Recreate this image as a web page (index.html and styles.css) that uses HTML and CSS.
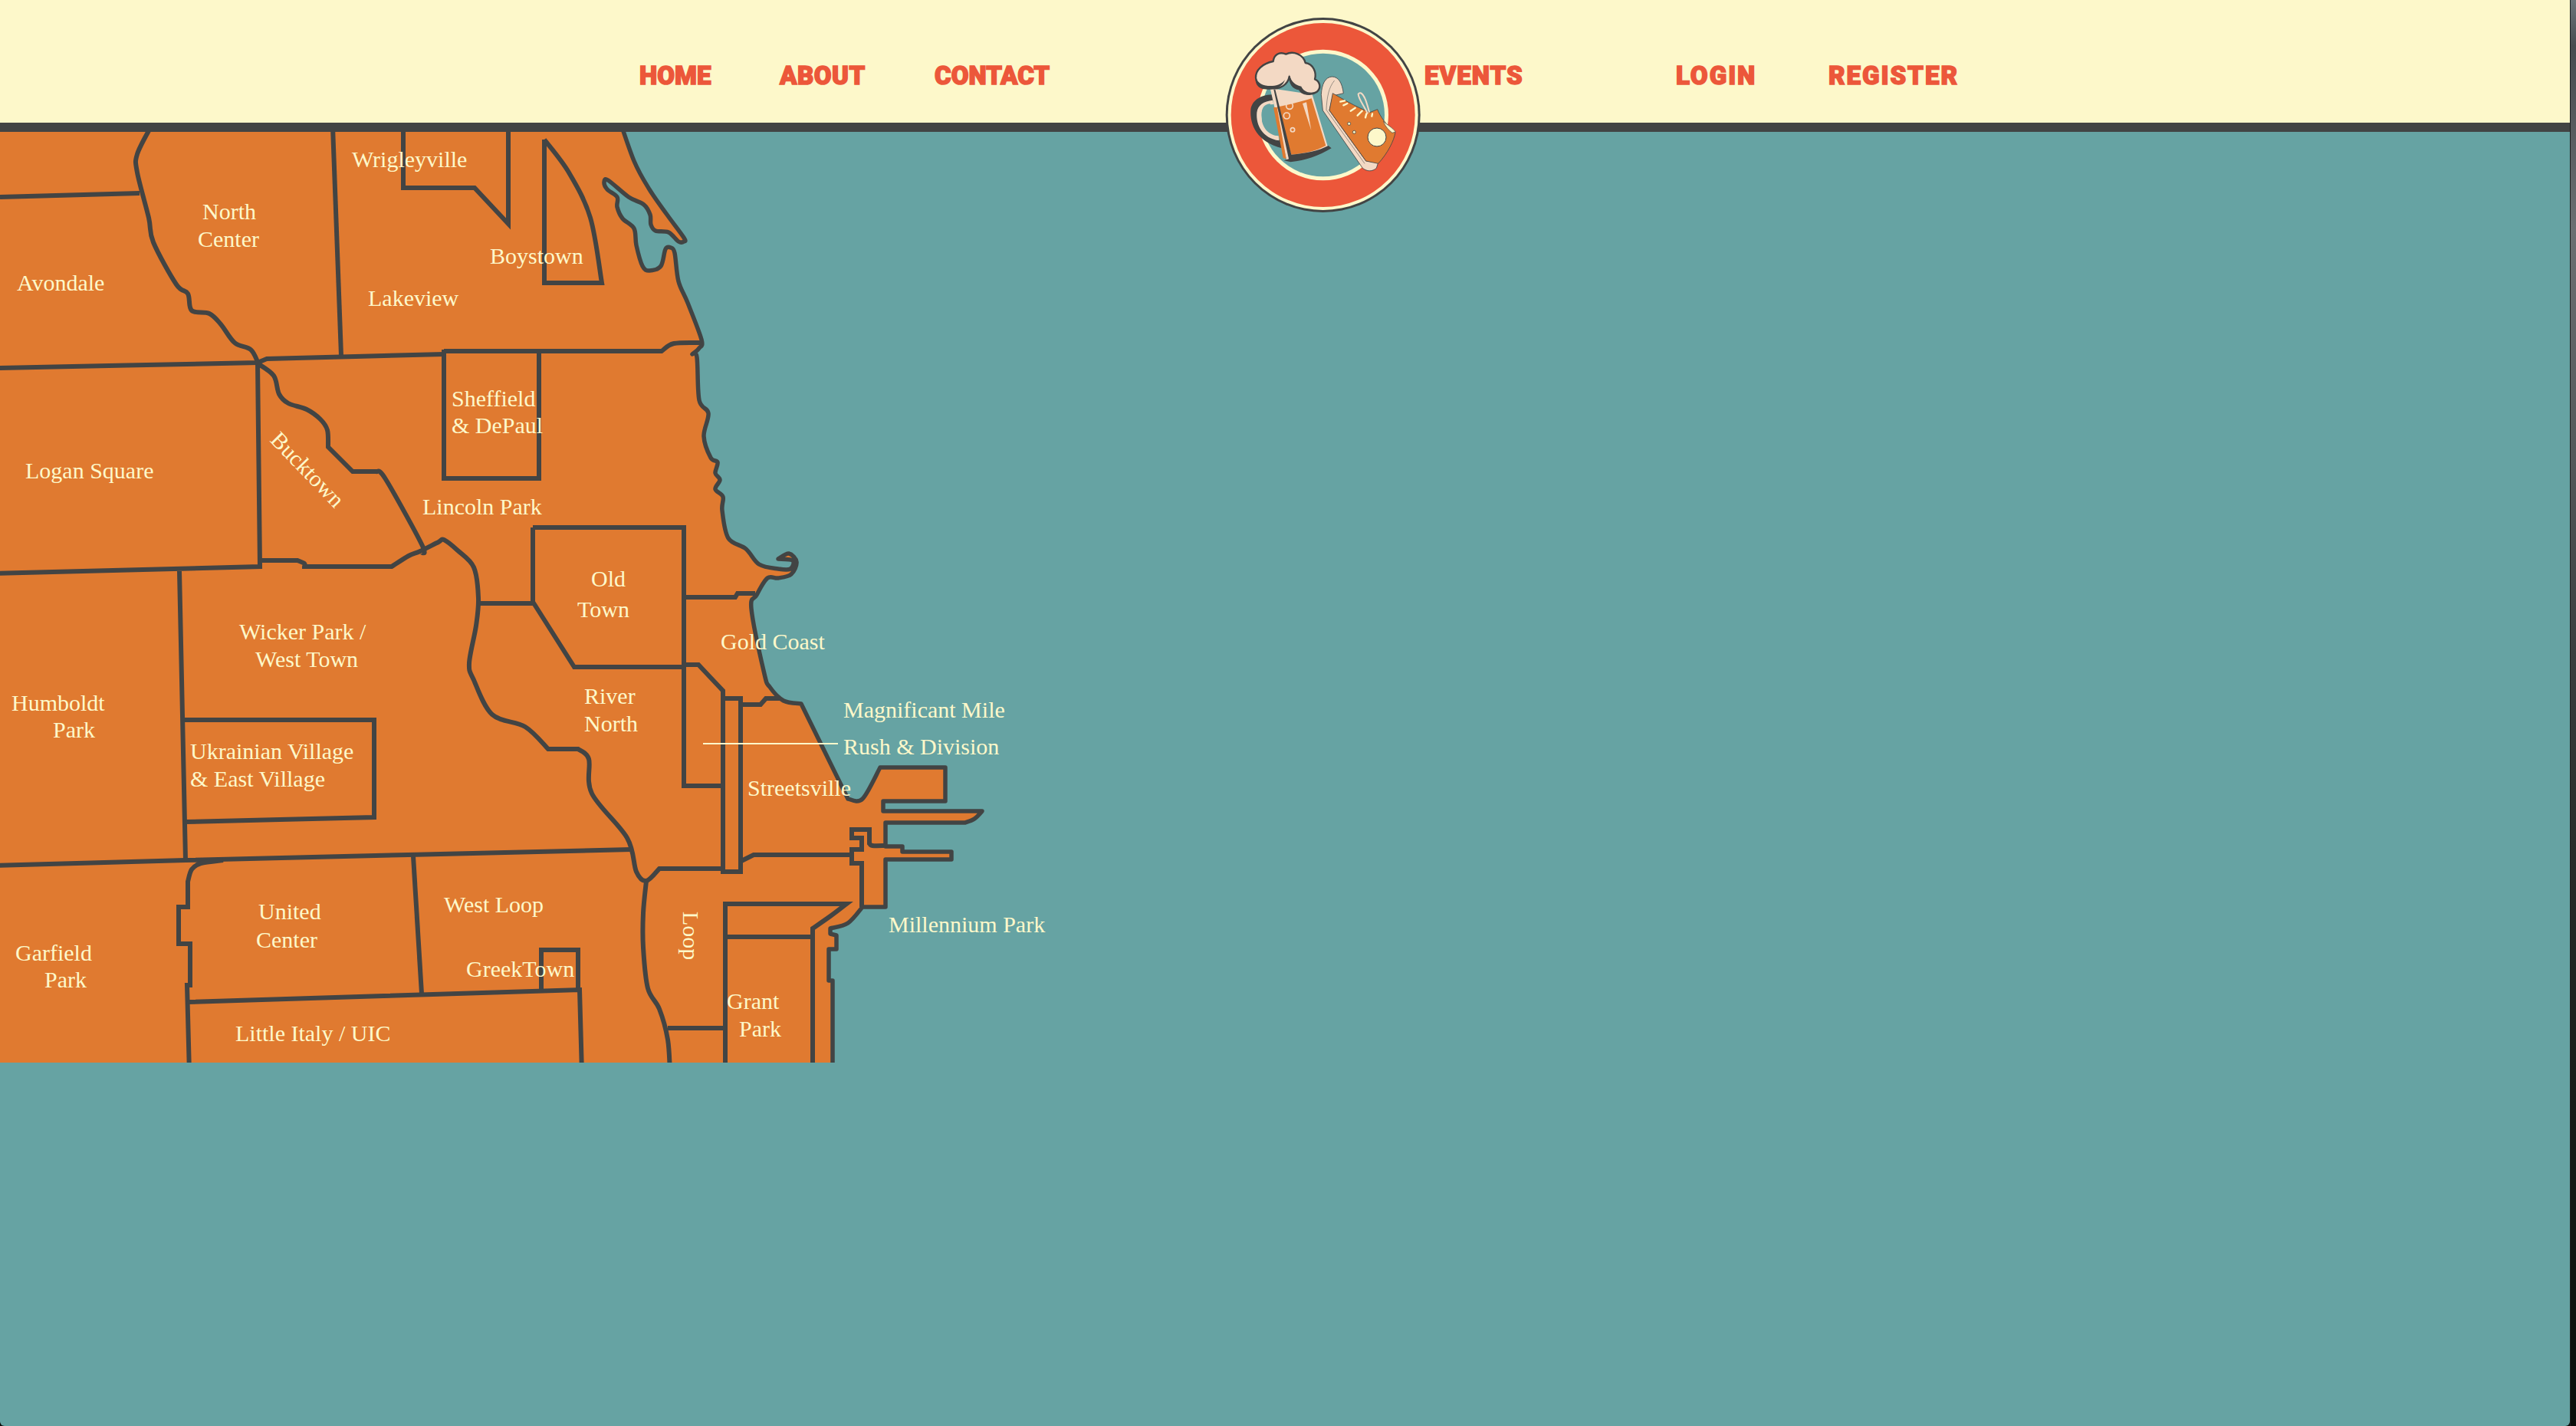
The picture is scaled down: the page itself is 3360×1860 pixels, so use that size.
FILE: index.html
```html
<!DOCTYPE html>
<html>
   <head>
      <meta charset="UTF-8">
      <title>Neighborhood Crawl</title>
      <link rel="stylesheet" href="styles.css">
   </head>
   <body>
      <div class="window">
         <header class="topbar">
            <nav class="nav">
               <a class="nav-link nav-home" href="#">Home</a>
               <a class="nav-link nav-about" href="#">About</a>
               <a class="nav-link nav-contact" href="#">Contact</a>
               <a class="nav-link nav-events" href="#">Events</a>
               <a class="nav-link nav-login" href="#">Login</a>
               <a class="nav-link nav-register" href="#">Register</a>
            </nav>
            <svg class="logo" viewBox="291 60 780 780">
               <circle cx="677" cy="450" r="381" fill="#424444"/>
               <circle cx="677" cy="450" r="372" fill="#fdf8ca"/>
               <circle cx="677" cy="450" r="360" fill="#ec573a"/>
               <circle cx="677" cy="450" r="256" fill="#fdf8ca"/>
               <circle cx="677" cy="450" r="241" fill="#66a3a3"/>

               <!-- mug handle -->
               <path fill="#424444" d="M478 370 C430 372 398 395 394 430 C390 490 420 555 515 580 L510 548 C455 540 425 490 430 440 C432 415 450 400 482 395 Z"/>
               <path fill="#f3d9c4" d="M480 392 C445 396 422 410 418 440 C414 490 440 540 505 550 L503 532 C465 530 435 500 436 450 C436 425 450 408 484 408 Z"/>
               <path fill="#66a3a3" d="M470 406 C445 408 436 425 437 452 C438 495 460 522 497 530 Z"/>
               <!-- mug body -->
               <path fill="#f3d9c4" d="M470 345 L635 370 L697 578 C650 605 600 620 535 628 Z"/>
               <path fill="#e07a30" d="M497 418 C540 412 590 398 632 385 L688 570 C650 590 610 600 553 605 Z"/>
               <path fill="#e07a30" d="M483 420 L497 420 L533 622 L521 618 Z"/>
               <path fill="#f3d9c4" d="M597 405 L612 400 L631 510 Z"/>
               <path fill="#424444" d="M484 350 L490 350 L553 605 C610 600 660 590 698 570 L710 580 C660 610 610 628 550 634 L524 628 L543 622 Z"/>
               <circle class="bubble" cx="546" cy="414" r="13"/>
               <circle class="bubble" cx="535" cy="453" r="12"/>
               <circle class="bubble" cx="558" cy="508" r="8"/>
               <!-- foam -->
               <path fill="#f3d9c4" stroke="#424444" stroke-width="7" stroke-linejoin="round" d="M414 305 C412 275 440 248 482 240 C485 215 505 200 532 212 C560 198 600 212 608 246 C640 250 652 285 645 310 C665 318 672 345 652 360 C630 375 600 370 590 348 C570 345 550 330 545 300 C540 330 510 350 480 345 C450 348 418 340 414 305 Z"/>
               <path fill="#424444" d="M545 292 C552 320 570 335 592 338 C600 358 625 368 650 358 C625 378 595 375 582 352 C560 350 540 330 545 292 Z"/>
               <path fill="#424444" d="M414 300 C420 330 450 338 480 336 C500 335 520 325 528 312 C520 340 490 352 460 350 C430 350 408 335 414 300 Z"/>

               <!-- shoe -->
               <path class="shoe-sole" d="M670 370 C672 330 685 302 712 300 C738 300 752 325 757 365 L715 375 L702 432 L845 630 L893 636 L886 658 C870 672 850 672 832 658 L676 432 Z"/>
               <path class="shoe-line" d="M690 430 L840 640 M690 430 C692 380 700 340 722 315"/>
               <path class="shoe-top" d="M715 365 C750 385 800 415 860 440 L890 428 C900 455 925 490 960 518 C955 550 930 600 893 640 L845 630 L702 432 Z"/>
               <path fill="#fdf8ca" stroke="#424444" stroke-width="2" d="M913 475 C930 490 950 500 961 516 L948 520 C935 510 920 495 913 475 Z"/>
               <circle cx="888" cy="537" r="36" fill="#fdf8ca" stroke="#424444" stroke-width="3"/>
               <circle class="eyelet" cx="779" cy="484" r="6"/>
               <circle class="eyelet" cx="799" cy="517" r="6"/>
               <path class="lace-bow" d="M852 445 C838 415 815 385 815 368 C825 355 838 375 845 395 C850 410 855 425 858 440"/>
               <path class="lace" d="M745 398 L762 394 M757 412 L772 405 M785 434 L803 422 M812 452 L830 434 M843 460 L847 445 M868 455 L870 445"/>
            </svg>
         </header>

         <main class="stage">
            <svg class="map" width="1400" height="1214" viewBox="0 172 1400 1214">
               <!-- lake shore, this one carries the orange fill -->
               <path class="land" data-line="806,150! 827,210 847,247 870,280 892,310 892,315 885,315 872,303 855,301 849,293 848,280 840,267 820,257 793,235 788,238 792,247 805,257 805,270 812,285 827,298 830,320 838,347 847,353 862,347 868,325 875,323 880,330 885,367 897,395 915,443 912,454 903,462! 909,466 912,522 924,539 918,569 927,597 936,603 933,617 939,626 933,638 943,648 942,666 950,702 973,716 990,736 1015,742 1031,742 1034,731 1015,729! 1029,722 1039,733 1032,749 1015,754 1001,754 987,776 980,794 997,879 1004,896 1022,914 1045,918! 1106,1042! 1125,1042 1148,1001! 1233,1001! 1233,1045! 1152,1045! 1152,1058! 1281,1058! 1271,1068 1259,1073! 1155,1073! 1155,1104! 1177,1104! 1177,1111! 1241,1111! 1241,1121! 1155,1121! 1155,1183! 1125,1183! 1106,1204 1083,1211! 1083,1218! 1091,1220! 1091,1238! 1081,1238! 1081,1279! 1086,1279! 1086,1400! -20,1400! -20,150!"/>

               <path class="road" data-line="0,257! 182,252!"/>
               <path class="road" data-line="197,165! 179,201 179,225 194,284 200,316 230,371 245,383 250,405 273,409 288,423 306,447 327,456 336,472!"/>
               <path class="road" data-line="434,165! 445,464!"/>
               <path class="road" data-line="-5,480! 336,473! 348,468! 579,462!"/>
               <path class="road" data-line="579,458! 863,458! 879,448 915,447!"/>
               <path class="road" data-line="579,456! 579,624! 703,624! 703,455!"/>
               <path class="road" data-line="526,165! 526,245! 619,245! 663,292! 663,165!"/>
               <path class="road" data-line="710,182! 710,369! 785,369! 770,284 742,225 710,182!"/>
               <path class="road" data-line="336,474! 339,739! -5,748!"/>
               <path class="road" data-line="336,474! 357,490 364,514 376,526 400,534 418,547 427,561 428,583! 460,615! 491,615! 503,625 551,712 548,720!"/>
               <path class="road" data-line="339,731! 388,731! 397,735 397,739! 511,739! 533,725 548,719 572,707 579,704 597,718 618,740 624,780 621,816 612,865 618,887 642,932 685,948 715,977! 754,977! 768,990 772,1035 818,1093 830,1137 843,1149 860,1133! 945,1133!"/>
               <path class="road" data-line="695,688! 892,688! 892,1025! 942,1025!"/>
               <path class="road" data-line="695,688! 695,785! 749,870! 892,870!"/>
               <path class="road" data-line="624,787! 695,787!"/>
               <path class="road" data-line="892,779! 959,779! 962,774! 985,774!"/>
               <path class="road" data-line="892,867! 911,867! 943,901! 943,1137! 966,1137! 966,911! 943,911!"/>
               <path class="road" data-line="967,919! 992,919! 999,911! 1018,911!"/>
               <path class="road" data-line="967,1123! 983,1115! 1111,1115!"/>
               <path class="road" data-line="1155,1103! 1138,1103 1134,1100! 1134,1082! 1111,1082! 1111,1093! 1124,1093! 1124,1108! 1111,1108! 1111,1126! 1124,1126! 1124,1183!"/>
               <path class="road" data-line="946,1400! 946,1179! 1104,1179! 1083,1195 1060,1211! 1060,1400!"/>
               <path class="road" data-line="946,1222! 1060,1222!"/>
               <path class="road" data-line="843,1149! 839,1191 839,1236 845,1289 860,1316 871,1356 874,1400!"/>
               <path class="road" data-line="871,1341! 946,1341!"/>
               <path class="road" data-line="234,745! 242,1122!"/>
               <path class="road" data-line="-5,1129! 242,1122! 823,1108!"/>
               <path class="road" data-line="239,939! 488,939! 488,1066! 242,1072!"/>
               <path class="road" data-line="291,1122! 262,1126 250,1134 245,1150! 245,1183! 233,1183! 233,1231! 248,1231! 248,1285! 244,1285! 247,1400!"/>
               <path class="road" data-line="539,1117! 550,1296!"/>
               <path class="road" data-line="245,1307! 756,1291! 759,1400!"/>
               <path class="road" data-line="706,1291! 706,1239! 754,1239! 754,1291!"/>

               <line class="leader" x1="917" y1="970" x2="1093" y2="970"/>

               <text class="label" x="459" y="218">Wrigleyville</text>
               <text class="label" x="264" y="286">North</text>
               <text class="label" x="258" y="322">Center</text>
               <text class="label" x="22" y="379">Avondale</text>
               <text class="label" x="639" y="344">Boystown</text>
               <text class="label" x="480" y="399">Lakeview</text>
               <text class="label" x="589" y="530">Sheffield</text>
               <text class="label" x="589" y="565">&amp; DePaul</text>
               <text class="label" transform="translate(351 575) rotate(46)">Bucktown</text>
               <text class="label" x="33" y="624">Logan Square</text>
               <text class="label" x="551" y="671">Lincoln Park</text>
               <text class="label" x="771" y="765">Old</text>
               <text class="label" x="753" y="805">Town</text>
               <text class="label" x="312" y="834">Wicker Park /</text>
               <text class="label" x="333" y="870">West Town</text>
               <text class="label" x="15" y="927">Humboldt</text>
               <text class="label" x="69" y="962">Park</text>
               <text class="label" x="762" y="918">River</text>
               <text class="label" x="762" y="954">North</text>
               <text class="label" x="248" y="990">Ukrainian Village</text>
               <text class="label" x="248" y="1026">&amp; East Village</text>
               <text class="label" x="337" y="1199">United</text>
               <text class="label" x="334" y="1236">Center</text>
               <text class="label" x="579" y="1190">West Loop</text>
               <text class="label" x="20" y="1253">Garfield</text>
               <text class="label" x="58" y="1288">Park</text>
               <text class="label" x="608" y="1274">GreekTown</text>
               <text class="label" x="307" y="1358">Little Italy / UIC</text>
               <text class="label" transform="translate(891 1189) rotate(90)">Loop</text>
               <text class="label" x="940" y="847">Gold Coast</text>
               <text class="label" x="1100" y="936">Magnificant Mile</text>
               <text class="label" x="1100" y="984">Rush &amp; Division</text>
               <text class="label" x="975" y="1038">Streetsville</text>
               <text class="label" x="1159" y="1216">Millennium Park</text>
               <text class="label" x="948" y="1316">Grant</text>
               <text class="label" x="964" y="1352">Park</text>
            </svg>
         </main>
      </div>
      <div class="desktop-edge"></div>
      <script src="map.js"></script>
   </body>
</html>
```

FILE: styles.css
```css
html, body {
   height: 100%;
}
body {
   margin: 0;
   display: flex;
   background-color: #0a0e0b;
   overflow: hidden;
}
.window {
   position: relative;
   width: 3352px;
   height: 1860px;
   display: flex;
   flex-direction: column;
   background-color: #66a3a3;
   border-radius: 0 0 6px 6px;
   overflow: hidden;
}
.topbar {
   height: 160px;
   flex: none;
   background-color: #fdf8ca;
   border-bottom: 12px solid #424444;
}
.nav {
   display: flex;
   height: 100%;
   padding-left: 834px;
   padding-top: 36px;
   box-sizing: border-box;
   align-items: center;
   gap: 90px;
}
.nav-link {
   font-family: Roboto, "Liberation Sans", sans-serif;
   font-size: 33px;
   font-weight: 900;
   line-height: 1;
   -webkit-text-stroke: 1.5px #ec573a;
   white-space: nowrap;
   text-transform: uppercase;
   text-decoration: none;
   color: #ec573a;
}
.nav-home {
   width: 93px;
}
.nav-about {
   width: 112px;
   letter-spacing: 0.5px;
}
.nav-contact {
   width: 150px;
   margin-right: 399px;
}
.nav-events {
   width: 129px;
   margin-right: 109px;
   letter-spacing: 1px;
}
.nav-login {
   width: 109px;
   letter-spacing: 2px;
}
.nav-register {
   width: 170px;
   letter-spacing: 2px;
}
.logo {
   position: absolute;
   left: 1597px;
   top: 20px;
   width: 260px;
   height: 260px;
   z-index: 2;
}
.bubble {
   fill: none;
   stroke: #f3d9c4;
   stroke-width: 5;
}
.shoe-sole {
   fill: #f3d9c4;
   stroke: #424444;
   stroke-width: 2.5;
}
.shoe-line {
   fill: none;
   stroke: #424444;
   stroke-width: 1.5;
}
.shoe-top {
   fill: #e07a30;
   stroke: #424444;
   stroke-width: 2.5;
}
.eyelet {
   fill: #fdf8ca;
   stroke: #424444;
   stroke-width: 2.5;
}
.lace {
   fill: none;
   stroke: #fdf8ca;
   stroke-width: 7;
   stroke-linecap: round;
}
.lace-bow {
   fill: none;
   stroke: #f3d9c4;
   stroke-width: 6;
   stroke-linejoin: round;
}
.stage {
   flex: 1;
}
.map {
   display: block;
}
.land {
   fill: #e07a30;
   stroke: #424444;
   stroke-width: 5.5;
   stroke-linejoin: round;
}
.road {
   fill: none;
   stroke: #424444;
   stroke-width: 6;
   stroke-linejoin: miter;
}
.leader {
   stroke: #fdf8ca;
   stroke-width: 2;
}
.label {
   font-family: "Liberation Serif", "Times New Roman", serif;
   font-size: 30px;
   fill: #fdf8ca;
}
.desktop-edge {
   width: 8px;
   height: 1860px;
   border-left: 1px solid #1c1f20;
   box-sizing: border-box;
   background-image: linear-gradient(to bottom, #6d757b 0, #474c50 60px, #6c6f72 300px, #54585a 600px, #3b3e3f 850px, #2a2d2b 1100px, #1a1e1a 1400px, #0a0e0b 1860px);
}
```

FILE: map.js
```js
// points in data-line are x,y. a "!" marks a hard corner, the stretches
// between corners get smoothed (catmull rom) so the river lines stay round
function smooth(run)
{
   var d = "";
   for (var i = 0; i < run.length - 1; i++)
   {
      var p0 = run[i - 1] || run[i];
      var p1 = run[i];
      var p2 = run[i + 1];
      var p3 = run[i + 2] || p2;
      d += " C" + (p1.x + (p2.x - p0.x) / 6) + " " + (p1.y + (p2.y - p0.y) / 6)
         + " " + (p2.x - (p3.x - p1.x) / 6) + " " + (p2.y - (p3.y - p1.y) / 6)
         + " " + p2.x + " " + p2.y;
   }
   return d;
}

var lines = document.querySelectorAll("[data-line]");
for (var n = 0; n < lines.length; n++)
{
   var tokens = lines[n].getAttribute("data-line").trim().split(/\s+/);
   var run = [];
   var d = "";
   for (var t = 0; t < tokens.length; t++)
   {
      var corner = tokens[t].charAt(tokens[t].length - 1) === "!";
      var xy = tokens[t].replace("!", "").split(",");
      var pt = { x: Number(xy[0]), y: Number(xy[1]) };
      if (t === 0) d = "M" + pt.x + " " + pt.y;
      run.push(pt);
      if (corner && run.length > 1)
      {
         d += smooth(run);
         run = [pt];
      }
   }
   if (lines[n].classList.contains("land")) d += " Z";
   lines[n].setAttribute("d", d);
}
```
